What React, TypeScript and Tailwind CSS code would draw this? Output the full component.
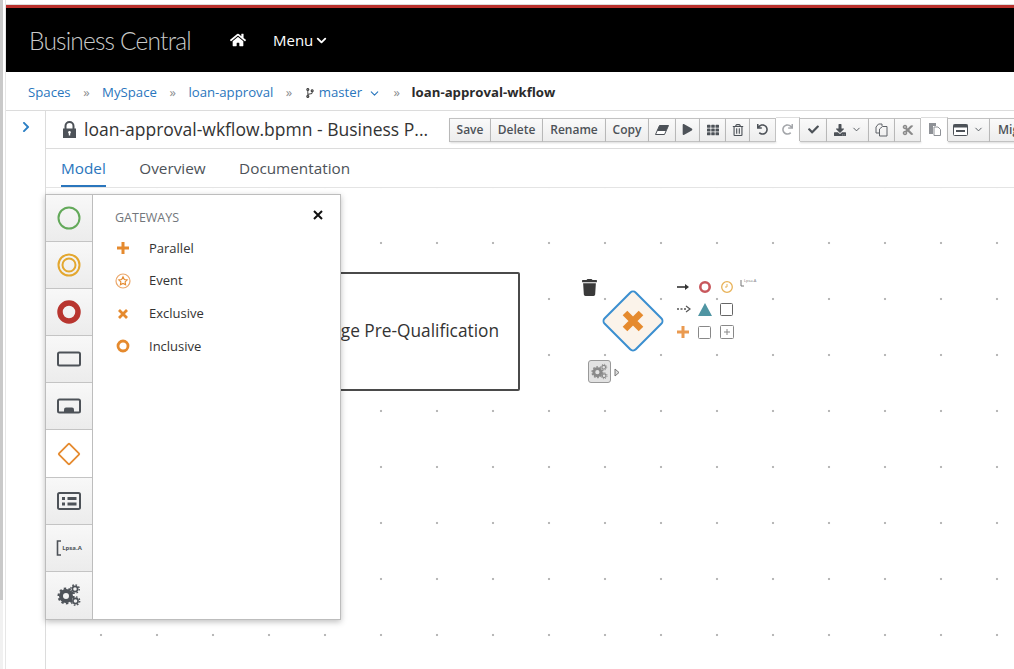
import { FaHome, FaTrash, FaCheck, FaPlay, FaTh, FaRegTrashAlt, FaUndo, FaRedo, FaDownload, FaCut, FaCodeBranch, FaChevronRight } from "react-icons/fa";
import { FiChevronDown } from "react-icons/fi";

const orange = "#e58a2e";
const slate = "#4d5258";

function Tool({ children, muted, width }: { children: React.ReactNode; muted?: boolean; width: string }) {
  return (
    <div
      className={`flex shrink-0 items-center justify-center border-r border-[#c2c2c2] ${width} ${
        muted
          ? "-mt-px h-[24px] border-t border-t-[#ddd] bg-white text-[#8e9196]"
          : "h-[24px] border-y border-y-[#c2c2c2] bg-gradient-to-b from-[#fafafa] to-[#ededed] text-[#4d5258] shadow-[0_1px_2px_rgba(0,0,0,0.15)]"
      }`}
    >
      {children}
    </div>
  );
}

function Gears({ size = 24, color = slate }: { size?: number; color?: string }) {
  return (
    <svg width={size} height={size} viewBox="0 0 24 24" fill="none">
      <circle cx="9" cy="13" r="5" stroke={color} strokeWidth="4" />
      <circle cx="9" cy="13" r="7.5" stroke={color} strokeWidth="2" strokeDasharray="2.4 2.3" />
      <circle cx="18" cy="6" r="2.6" stroke={color} strokeWidth="1.6" />
      <circle cx="18" cy="6" r="4.2" stroke={color} strokeWidth="1.4" strokeDasharray="1.6 1.7" />
      <circle cx="18.5" cy="18" r="2.6" stroke={color} strokeWidth="1.6" />
      <circle cx="18.5" cy="18" r="4.2" stroke={color} strokeWidth="1.4" strokeDasharray="1.6 1.7" />
    </svg>
  );
}

function PaletteButton({ children, active }: { children: React.ReactNode; active?: boolean }) {
  return (
    <div
      className={`flex h-[47.1px] items-center justify-center border-b border-[#c4c4c4] last:border-b-0 ${
        active ? "bg-white" : "bg-gradient-to-b from-[#f8f8f8] to-[#ececec]"
      }`}
    >
      {children}
    </div>
  );
}

function Ring({ color, r, w }: { color: string; r: number; w: number }) {
  return (
    <svg width="24" height="24" viewBox="0 0 24 24" fill="none">
      <circle cx="12" cy="12" r={r} stroke={color} strokeWidth={w} />
    </svg>
  );
}

function GatewayItem({ icon, label }: { icon: React.ReactNode; label: string }) {
  return (
    <div className="flex h-[32.7px] items-center">
      <div className="flex w-[16px] justify-center">{icon}</div>
      <span className="ml-[18px] text-[13px] text-[#333]">{label}</span>
    </div>
  );
}

function Sep() {
  return <span className="mx-[12.5px] text-[13px] text-[#8b8d8f]">»</span>;
}

export default function App() {
  return (
    <div className="flex h-[669px] w-[1014px] overflow-hidden bg-white font-['Open_Sans',sans-serif]">
      <div className="flex w-[6px] shrink-0 flex-col border-r border-[#e6e6e6]">
        <div className="h-[600px] w-[3px] bg-[#c9c9c9]" />
        <div className="w-[3px] flex-1 bg-[#f1f1f1]" />
      </div>
      <div className="flex min-w-0 flex-1 flex-col">
        <div className="h-[5px] shrink-0 border-b border-[#ddd] bg-white" />
        <div className="flex h-[67px] shrink-0 items-center border-t-[3px] border-[#b9302c] bg-black pl-[23px]">
          <span className="mt-[2px] w-[201px] font-['Lato',sans-serif] text-[24.5px] font-light tracking-[-0.8px] text-[#c9c9c9]">
            Business Central
          </span>
          <FaHome className="text-[16px] text-white" />
          <span className="ml-[27px] text-[15px] font-medium text-white">Menu</span>
          <FiChevronDown className="ml-[1px] text-[15px] text-white" strokeWidth={3} />
        </div>

        <div className="flex h-[39px] shrink-0 items-center border-b border-[#dcdcdc] pl-[22px] pt-[4px] text-[13.2px] text-[#2a76bd]">
          <span>Spaces</span>
          <Sep />
          <span>MySpace</span>
          <Sep />
          <span>loan-approval</span>
          <Sep />
          <FaCodeBranch className="text-[10px] text-[#444]" />
          <span className="ml-[4px]">master</span>
          <FiChevronDown className="ml-[6px] text-[13px]" />
          <Sep />
          <span className="-ml-px font-bold text-[#2b2b2b]">loan-approval-wkflow</span>
        </div>

        <div className="flex min-h-0 flex-1">
          <div className="flex w-[40px] shrink-0 justify-center border-r border-[#dcdcdc] pt-[10px]">
            <FaChevronRight className="text-[12px] text-[#2b7fc4]" />
          </div>

          <div className="flex min-w-0 flex-1 flex-col">
            <div className="flex h-[38px] shrink-0 items-center border-b border-[#dcdcdc] pl-[16px]">
              <svg className="shrink-0" width="15" height="17" viewBox="0 0 15 17" fill="none">
                <path d="M3.5 8 V5 a4 4 0 0 1 8 0 V8" stroke="#4d5258" strokeWidth="2" />
                <path d="M1 7.5 H14 V17 H1 Z M7.5 10 a1.4 1.4 0 0 0 -0.7 2.6 V14.5 H8.2 V12.6 A1.4 1.4 0 0 0 7.5 10 Z" fill="#4d5258" fillRule="evenodd" />
              </svg>
              <span className="ml-[7px] w-[365px] shrink-0 truncate text-[17.5px] text-[#333]">
                loan-approval-wkflow.bpmn - Business P...
              </span>
              <div className="flex shrink-0 border-l border-[#c2c2c2] text-[12px] font-semibold text-[#4d5258]">
                <Tool width="w-[41px]"><span>Save</span></Tool>
                <Tool width="w-[52px]"><span>Delete</span></Tool>
                <Tool width="w-[63px]"><span>Rename</span></Tool>
                <Tool width="w-[43px]"><span>Copy</span></Tool>
                <Tool width="w-[27px]">
                  <svg width="14" height="10" viewBox="0 0 14 10">
                    <path d="M4.5 0.5 H13.5 L9.5 9.5 H0.5 Z" fill="#fff" stroke="#4d5258" />
                    <path d="M4.5 0.5 H13.5 L11 6 H2 Z" fill="#4d5258" />
                  </svg>
                </Tool>
                <Tool width="w-[24px]"><FaPlay className="text-[11px]" /></Tool>
                <Tool width="w-[26px]"><FaTh className="text-[12px]" /></Tool>
                <Tool width="w-[24px]"><FaRegTrashAlt className="text-[12px]" /></Tool>
                <Tool width="w-[26px]"><FaUndo className="text-[11px]" /></Tool>
                <Tool width="w-[24px]" muted><FaRedo className="text-[11px] opacity-80" /></Tool>
                <Tool width="w-[27px]"><FaCheck className="text-[11px]" /></Tool>
                <Tool width="w-[42px]">
                  <FaDownload className="text-[12px]" />
                  <FiChevronDown className="ml-[5px] text-[11px]" />
                </Tool>
                <Tool width="w-[26px]">
                  <svg width="13" height="14" viewBox="0 0 13 14" fill="none" stroke="#5f6368">
                    <path d="M3.5 1 H7 V3 M3.5 1 L1 4 V10 H4" />
                    <path d="M7.5 3.5 H12 V13 H4.5 V6 Z" />
                  </svg>
                </Tool>
                <Tool width="w-[26px]"><FaCut className="text-[12px] text-[#8a8a8a]" /></Tool>
                <Tool width="w-[27px]" muted>
                  <svg width="13" height="14" viewBox="0 0 13 14">
                    <path d="M1 1 H8 V4 H5 V12 H1 Z" fill="#8e9196" />
                    <path d="M6 5 H10 L12.5 7.5 V13.5 H6 Z" fill="#fff" stroke="#8e9196" />
                  </svg>
                </Tool>
                <Tool width="w-[42px]">
                  <svg width="15" height="12" viewBox="0 0 15 12">
                    <rect x="0.5" y="0.5" width="14" height="11" rx="1" fill="#fff" stroke="#4d5258" />
                    <path d="M0.5 0.5 H14.5 V3.5 H0.5 Z M3 6 H12 V8 H3 Z" fill="#4d5258" />
                  </svg>
                  <FiChevronDown className="ml-[5px] text-[11px]" />
                </Tool>
                <Tool width="w-[64px]"><span className="w-full pl-[8px]">Migrate</span></Tool>
              </div>
            </div>

            <div className="flex h-[39px] shrink-0 items-stretch gap-[33.5px] border-b border-[#e4e4e4] pl-[15px] text-[15.3px] text-[#4d5258]">
              <div className="flex items-center border-b-2 border-[#2a76bd] pt-[2px] text-[#2a76bd]">Model</div>
              <div className="flex items-center">Overview</div>
              <div className="flex items-center">Documentation</div>
            </div>

            {/* canvas */}
            <div className="relative min-h-0 flex-1 bg-[radial-gradient(circle,#b8b8b8_1px,transparent_1.6px)] bg-[size:56px_56px] bg-[position:27px_27px]">
              <div className="absolute left-[200px] top-[84px] flex h-[119px] w-[274px] items-center justify-end rounded-[2px] border-2 border-[#4a4a4a] bg-white pb-[2px] pr-[19px] text-[17.3px] text-[#333]">
                Mortgage Pre-Qualification
              </div>

              {/* gateway */}
              <FaTrash className="absolute left-[535px] top-[91px] text-[17px] text-[#3a3a3a]" />
              <svg className="absolute left-[554px] top-[100px]" width="66" height="66" viewBox="0 0 66 66" fill="none">
                <rect x="11" y="11" width="44" height="44" rx="4" transform="rotate(45 33 33)" fill="#fbf3ea" stroke="#3b8fd0" strokeWidth="2" />
                <path d="M25 25 L41 41 M41 25 L25 41" stroke={orange} strokeWidth="6.5" />
              </svg>

              <svg className="absolute left-[630px] top-[90px]" width="90" height="62" viewBox="0 0 90 62" fill="none">
                <path d="M1 9 H11" stroke="#333" strokeWidth="1.6" />
                <path d="M9 6 L13 9 L9 12 Z" fill="#333" />
                <circle cx="29" cy="9" r="4.7" stroke="#c8575c" strokeWidth="2.6" />
                <circle cx="51" cy="9" r="5.3" stroke="#e8b258" strokeWidth="1.3" />
                <path d="M51 6 V9 H49" stroke="#e8b258" />
                <path d="M65 2 V8 H68" stroke="#777" />
                <path d="M1 31 H10" stroke="#555" strokeWidth="1.4" strokeDasharray="2 1.5" />
                <path d="M10 28 L14 31 L10 34" stroke="#555" strokeWidth="1.2" />
                <path d="M22 38 L29 25 L36 38 Z" fill="#4f95a3" />
                <rect x="44.5" y="25.5" width="12" height="12" rx="1" stroke="#666" />
                <path d="M7 48 V60 M1 54 H13" stroke="#ea9a50" strokeWidth="3" />
                <rect x="22.5" y="48.5" width="12" height="12" rx="1" stroke="#888" />
                <rect x="44.5" y="47.5" width="13" height="13" rx="1" stroke="#888" />
                <path d="M51 51 V57 M48 54 H54" stroke="#888" />
              </svg>
              <span className="absolute left-[698px] top-[91px] text-[4px] leading-none text-[#777]">Lpsa.A</span>

              <div className="absolute left-[542px] top-[172px] flex size-[23px] items-center justify-center rounded-[3px] border border-[#999] bg-[#e2e2e2]">
                <Gears size={17} color="#8a8a8a" />
              </div>
              <svg className="absolute left-[568px] top-[180px]" width="6" height="9" viewBox="0 0 6 9" fill="#ddd" stroke="#777">
                <path d="M1 1 L5 4.5 L1 8 Z" />
              </svg>

              {/* palette */}
              <div className="absolute left-[-1px] top-[6px] flex h-[426px] w-[296px] border border-[#bdbdbd] bg-white shadow-[0_2px_6px_rgba(0,0,0,0.25)]">
                <div className="flex w-[47px] shrink-0 flex-col border-r border-[#bdbdbd]">
                  <PaletteButton><Ring color="#63a95a" r={10.5} w={2} /></PaletteButton>
                  <PaletteButton>
                    <svg width="24" height="24" viewBox="0 0 24 24" fill="none">
                      <circle cx="12" cy="12" r="10.5" stroke="#e3a72f" strokeWidth="2" />
                      <circle cx="12" cy="12" r="6.5" stroke="#e3a72f" strokeWidth="2" />
                    </svg>
                  </PaletteButton>
                  <PaletteButton><Ring color="#b8352f" r={9} w={5.5} /></PaletteButton>
                  <PaletteButton>
                    <svg width="24" height="16" viewBox="0 0 24 16" fill="none">
                      <rect x="1" y="1.5" width="22" height="13" rx="1.5" stroke={slate} strokeWidth="2" />
                    </svg>
                  </PaletteButton>
                  <PaletteButton>
                    <svg width="24" height="16" viewBox="0 0 24 16" fill="none">
                      <rect x="1" y="1.5" width="22" height="13" rx="1.5" stroke={slate} strokeWidth="2" />
                      <path d="M7 14 V11.5 Q7 9.5 9 9.5 H15 Q17 9.5 17 11.5 V14 Z" fill={slate} />
                    </svg>
                  </PaletteButton>
                  <PaletteButton active>
                    <svg width="24" height="24" viewBox="0 0 24 24" fill="none">
                      <rect x="4.5" y="4.5" width="15" height="15" rx="1" transform="rotate(45 12 12)" stroke={orange} strokeWidth="1.8" />
                    </svg>
                  </PaletteButton>
                  <PaletteButton>
                    <svg width="24" height="18" viewBox="0 0 24 18" fill="none">
                      <rect x="1" y="1" width="22" height="16" rx="1.5" stroke={slate} strokeWidth="2" />
                      <path d="M5 5 H8 V8 H5 Z M5 10.5 H8 V13.5 H5 Z M10.5 5 H19.5 V8 H10.5 Z M10.5 10.5 H19.5 V13.5 H10.5 Z" fill={slate} />
                    </svg>
                  </PaletteButton>
                  <PaletteButton>
                    <div className="flex items-center">
                      <svg width="6" height="16" viewBox="0 0 6 16" fill="none">
                        <path d="M5 1 H1.5 V15 H5" stroke={slate} strokeWidth="1.6" />
                      </svg>
                      <span className="text-[6px] font-bold leading-none text-[#4d5258]">Lpsa.A</span>
                    </div>
                  </PaletteButton>
                  <PaletteButton><Gears /></PaletteButton>
                </div>

                <div className="relative flex-1 pl-[22px] pt-[14px]">
                  <div className="text-[12.5px] leading-[18px] text-[#72767b]">GATEWAYS</div>
                  <svg className="absolute right-[17px] top-[15px]" width="10" height="10" viewBox="0 0 10 10">
                    <path d="M1 1 L9 9 M9 1 L1 9" stroke="#111" strokeWidth="2" />
                  </svg>
                  <div className="mt-[5px] flex flex-col">
                    <GatewayItem
                      label="Parallel"
                      icon={
                        <svg width="12" height="12" viewBox="0 0 12 12">
                          <path d="M6 0 V12 M0 6 H12" stroke={orange} strokeWidth="3" />
                        </svg>
                      }
                    />
                    <GatewayItem
                      label="Event"
                      icon={
                        <svg width="16" height="16" viewBox="0 0 16 16" fill="none">
                          <circle cx="8" cy="8" r="7" stroke="#eba76a" strokeWidth="1.2" />
                          <path d="M8 3.8 L9.3 6.5 L12.2 6.9 L10.1 8.9 L10.6 11.8 L8 10.4 L5.4 11.8 L5.9 8.9 L3.8 6.9 L6.7 6.5 Z" stroke="#e58a2e" strokeWidth="1.1" />
                        </svg>
                      }
                    />
                    <GatewayItem
                      label="Exclusive"
                      icon={
                        <svg width="10" height="10" viewBox="0 0 10 10">
                          <path d="M1 1 L9 9 M9 1 L1 9" stroke={orange} strokeWidth="2.8" />
                        </svg>
                      }
                    />
                    <GatewayItem
                      label="Inclusive"
                      icon={
                        <svg width="14" height="14" viewBox="0 0 14 14" fill="none">
                          <circle cx="7" cy="7" r="5" stroke={orange} strokeWidth="2.8" />
                        </svg>
                      }
                    />
                  </div>
                </div>
              </div>
            </div>
          </div>
        </div>
      </div>
    </div>
  );
}
